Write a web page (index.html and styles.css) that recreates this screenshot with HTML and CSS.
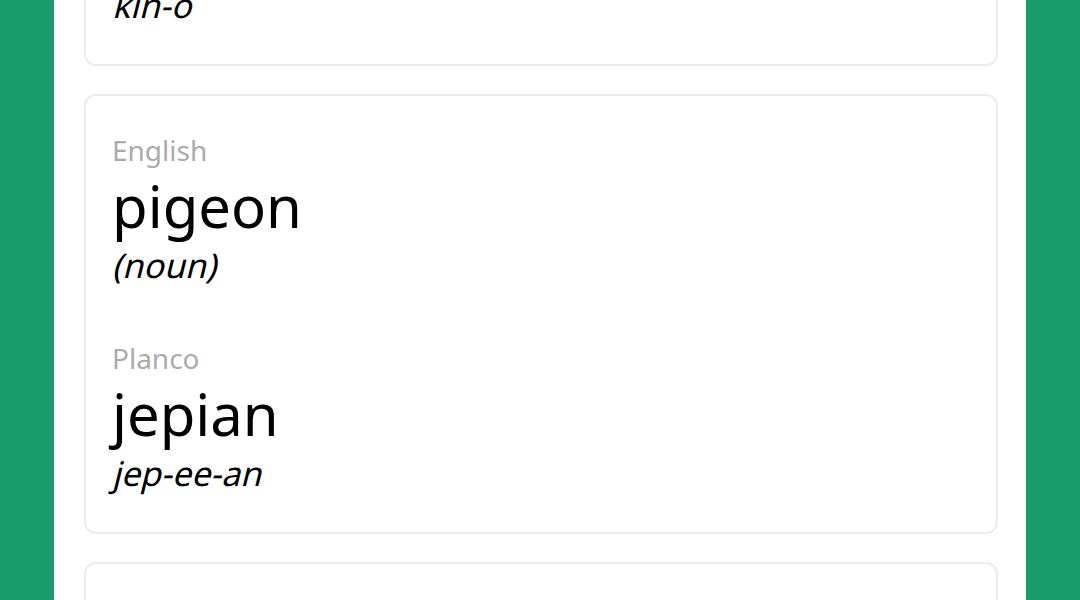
FILE: index.html
```html
<!DOCTYPE html>
<html lang="en">

<head>
  <meta charset="UTF-8">
  <meta name="viewport" content="width=device-width, initial-scale=1.0">
  <title>Planco Words</title>
  <link rel="stylesheet" href="styles.css">
</head>

<body>

  <main class="page">
    <div class="word-list">

      <div class="word-card">
        <div class="entry">
          <div class="lang">English</div>
          <div class="word">cinema</div>
          <div class="note">(noun)</div>
        </div>
        <div class="entry">
          <div class="lang">Planco</div>
          <div class="word">kino</div>
          <div class="note">kin-o</div>
        </div>
      </div>

      <div class="word-card">
        <div class="entry">
          <div class="lang">English</div>
          <div class="word">pigeon</div>
          <div class="note">(noun)</div>
        </div>
        <div class="entry">
          <div class="lang">Planco</div>
          <div class="word">jepian</div>
          <div class="note">jep-ee-an</div>
        </div>
      </div>

      <div class="word-card">
        <div class="entry">
          <div class="lang">English</div>
          <div class="word">river</div>
          <div class="note">(noun)</div>
        </div>
        <div class="entry">
          <div class="lang">Planco</div>
          <div class="word">rivo</div>
          <div class="note">ree-vo</div>
        </div>
      </div>

    </div>
  </main>

</body>

</html>
```

FILE: styles.css
```css
body {
  margin: 0;
  background-color: #179b6b;
  font-family: 'Noto Sans', sans-serif;
  color: #000;
  overflow: hidden;
}

.page {
  width: 90%;
  margin: 0 auto;
  min-height: 100vh;
  background-color: #fff;
  padding: 0 28px 0 30px;
  box-sizing: border-box;
}

.word-list {
  display: flex;
  flex-direction: column;
  gap: 28px;
  margin-top: -374px;
}

.word-card {
  border: 2px solid #ececec;
  border-radius: 12px;
  padding: 36px 26px 38px 26px;
  display: flex;
  flex-direction: column;
  gap: 54px;
}

.lang {
  font-size: 28px;
  line-height: 36px;
  color: #ababab;
}

.word {
  font-size: 58px;
  line-height: 76px;
}

/* slanted regular, not the true italic */
.note {
  font-size: 34px;
  line-height: 42px;
  transform: skewX(-14deg);
  transform-origin: 0 80%;
}
```
